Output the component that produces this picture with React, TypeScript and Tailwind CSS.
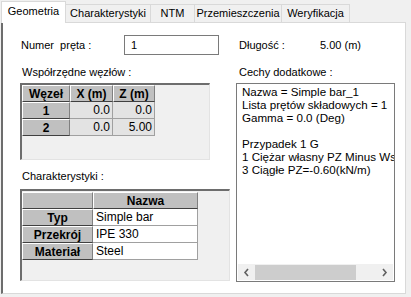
import React from 'react';

const tabs = ['Geometria', 'Charakterystyki', 'NTM', 'Przemieszczenia', 'Weryfikacja'];
const tabWidths = ['w-[65px]', 'w-[85px]', 'w-[44px]', 'w-[87px]', 'w-[68px]'];

const nodes = [
  ['1', '0.0', '0.0'],
  ['2', '0.0', '5.00'],
];

const props = [
  ['Typ', 'Simple bar'],
  ['Przekrój', 'IPE 330'],
  ['Materiał', 'Steel'],
];

const info = [
  'Nazwa = Simple bar_1',
  'Lista prętów składowych = 1',
  'Gamma = 0.0 (Deg)',
  '',
  'Przypadek 1 G',
  '1 Ciężar własny PZ Minus Wsp:',
  '3 Ciągłe PZ=-0.60(kN/m)',
];

// raised grey header cell, like the old grid controls
const fixed =
  'h-[17px] bg-[#c0c0c0] border-t border-l border-t-white border-l-white border-r border-b border-r-[#808080] border-b-[#404040] flex items-center justify-center font-bold text-[12px] leading-none';

function Tabs() {
  return (
    <div className="flex items-end h-[22px] pl-[1px]">
      {tabs.map((t, i) =>
        i === 0 ? (
          <div
            key={t}
            className={`${tabWidths[i]} h-[22px] -mb-px relative z-10 bg-white border border-b-0 border-[#d9d9d9] flex items-center justify-center pb-[2px]`}
          >
            {t}
          </div>
        ) : (
          <div
            key={t}
            className={`${tabWidths[i]} h-[18px] bg-[#f0f0f0] border border-l-0 border-b-0 border-[#d9d9d9] flex items-center justify-center`}
          >
            {t}
          </div>
        )
      )}
    </div>
  );
}

function NodesGrid() {
  return (
    <div className="w-[190px] h-[77px] bg-[#f0f0f0] border-l-2 border-t-2 border-[#6d6d6d] border-r border-b border-r-[#e3e3e3] border-b-[#e3e3e3]">
      <div className="grid grid-cols-[48px_43px_42px] w-fit [font-family:Arial,'Liberation_Sans',sans-serif]">
        <div className={fixed}>Węzeł</div>
        <div className={fixed}>X (m)</div>
        <div className={fixed}>Z (m)</div>
        {nodes.map((r) => (
          <React.Fragment key={r[0]}>
            <div className={fixed}>{r[0]}</div>
            <div className="h-[17px] bg-[#e3e3e3] border-r border-b border-[#a0a0a0] flex items-center justify-end pr-[2px] text-[12px] leading-none">
              {r[1]}
            </div>
            <div className="h-[17px] bg-[#e3e3e3] border-r border-b border-[#a0a0a0] flex items-center justify-end pr-[2px] text-[12px] leading-none">
              {r[2]}
            </div>
          </React.Fragment>
        ))}
      </div>
    </div>
  );
}

function PropsGrid() {
  return (
    <div className="w-[210px] h-[92px] bg-[#f0f0f0] border-l-2 border-t-2 border-[#6d6d6d] border-r border-b border-r-[#e3e3e3] border-b-[#e3e3e3]">
      <div className="grid grid-cols-[71px_105px] w-fit mt-px [font-family:Arial,'Liberation_Sans',sans-serif]">
        <div className={fixed}></div>
        <div className={fixed}>Nazwa</div>
        {props.map((r) => (
          <React.Fragment key={r[0]}>
            <div className={fixed}>{r[0]}</div>
            <div className="h-[17px] bg-white border-r border-b border-[#a0a0a0] flex items-center pl-[3px] text-[12px] leading-none">
              {r[1]}
            </div>
          </React.Fragment>
        ))}
      </div>
    </div>
  );
}

function InfoBox() {
  return (
    <div className="w-[159px] h-[199px] border border-[#7a7a7a] bg-white flex flex-col">
      <div className="flex-1 overflow-hidden pl-[5px] pt-px text-[11.6px]">
        {info.map((l, i) => (
          <div key={i} className="h-[13px] leading-[13px] whitespace-nowrap">
            {l}
          </div>
        ))}
      </div>
      <div className="h-[16px] bg-[#f0f0f0] flex items-center mb-px mx-px">
        <div className="w-[17px] flex justify-center">
          <svg width="7" height="9" viewBox="0 0 7 9">
            <path d="M5 1 L2 4.5 L5 8" stroke="#606060" strokeWidth="1.6" fill="none" />
          </svg>
        </div>
        <div className="w-[101px] h-[15px] bg-[#cdcdcd]" />
        <div className="flex-1" />
        <div className="w-[17px] flex justify-center">
          <svg width="7" height="9" viewBox="0 0 7 9">
            <path d="M2 1 L5 4.5 L2 8" stroke="#606060" strokeWidth="1.6" fill="none" />
          </svg>
        </div>
      </div>
    </div>
  );
}

export default function App() {
  return (
    <div className="w-[411px] h-[297px] bg-[#f0f0f0] text-[11px] text-black [font-family:'Liberation_Sans',Arial,sans-serif] overflow-hidden">
      <Tabs />
      <div className="ml-px w-[405px] h-[272px] bg-white border border-[#d9d9d9] border-l-2 border-l-[#6d6d6d] flex">
        {/* left column */}
        <div className="w-[231px] pl-[17px] pt-[12px]">
          <div className="flex items-center h-[20px]">
            <div className="w-[104px] pl-px whitespace-pre">Numer  pręta :</div>
            <div className="w-[95px] h-[20px] border border-[#7a7a7a] flex items-center pl-[6px]">1</div>
          </div>
          <div className="h-[13px] leading-[13px] mt-[11px] pl-[2px]">Współrzędne węzłów :</div>
          <div className="mt-[4px]">
            <NodesGrid />
          </div>
          <div className="h-[13px] leading-[13px] mt-[10px] pl-[2px]">Charakterystyki :</div>
          <div className="mt-[6px]">
            <PropsGrid />
          </div>
        </div>
        {/* right column */}
        <div className="pl-[2px] pt-[12px]">
          <div className="flex items-center h-[20px] pl-[3px]">
            <div className="w-[81px]">Długość :</div>
            <div>5.00 (m)</div>
          </div>
          <div className="h-[13px] leading-[13px] mt-[11px] pl-[3px]">Cechy dodatkowe :</div>
          <div className="mt-[4px]">
            <InfoBox />
          </div>
        </div>
      </div>
    </div>
  );
}
